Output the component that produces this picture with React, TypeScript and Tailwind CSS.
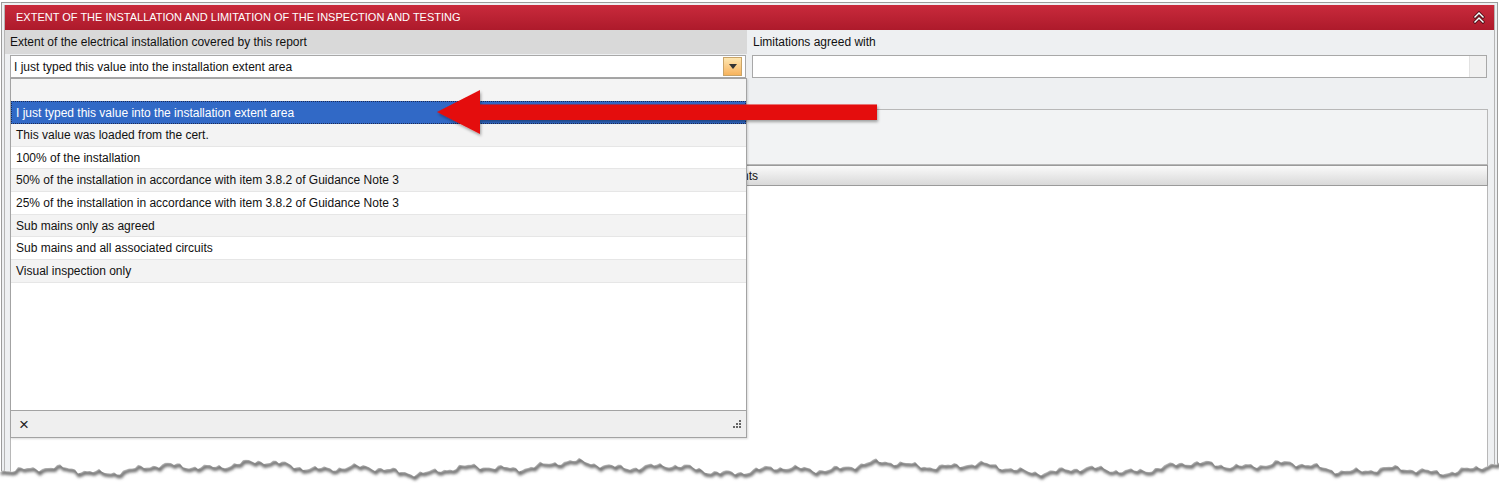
import React from 'react'

const options = [
  'This value was loaded from the cert.',
  '100% of the installation',
  '50% of the installation in accordance with item 3.8.2 of Guidance Note 3',
  '25% of the installation in accordance with item 3.8.2 of Guidance Note 3',
  'Sub mains only as agreed',
  'Sub mains and all associated circuits',
  'Visual inspection only'
]

// torn paper edge across the bottom of the screenshot
const edge: [number, number][] = []
for (let x = 0; x <= 1500; x += 3) {
  const y =
    467 +
    3.4 * Math.sin(x * 0.019) +
    2.6 * Math.sin(x * 0.061 + 1.3) +
    1.8 * Math.sin(x * 0.17 + 0.7) +
    1.3 * Math.sin(x * 0.47 + 2.1) +
    0.8 * Math.sin(x * 1.31 + 0.4)
  edge.push([x, Math.round(y * 10) / 10])
}
const edgeLine = edge.map(([x, y], i) => `${i ? 'L' : 'M'}${x},${y}`).join(' ')
const belowEdge = `${edgeLine} L1500,483 L0,483 Z`

const TornEdge = () => (
  <svg className="pointer-events-none absolute left-0 top-0" width="1499" height="483" viewBox="0 0 1499 483">
    <defs>
      <clipPath id="below">
        <path d={belowEdge} />
      </clipPath>
      <filter id="blur" x="-5%" y="-50%" width="110%" height="200%">
        <feGaussianBlur stdDeviation="1.5" />
      </filter>
    </defs>
    <path d={belowEdge} fill="#ffffff" />
    <g clipPath="url(#below)">
      <path d={edgeLine} transform="translate(1 2)" fill="none" stroke="#666" strokeWidth="3.5" filter="url(#blur)" />
    </g>
  </svg>
)

const Arrow = () => (
  <svg className="pointer-events-none absolute left-0 top-0" width="900" height="150" viewBox="0 0 900 150">
    <defs>
      <filter id="ash" x="-5%" y="-30%" width="110%" height="160%">
        <feDropShadow dx="1" dy="2" stdDeviation="1.5" floodColor="#000" floodOpacity="0.35" />
      </filter>
    </defs>
    <polygon
      points="437,112 480,90 480,104.5 877,104.5 877,120 480,120 480,134"
      fill="#e40c0c"
      filter="url(#ash)"
    />
  </svg>
)

const Collapse = () => (
  <svg width="12" height="13" viewBox="0 0 12 13">
    <path d="M2 6 L6 2 L10 6 M2 11 L6 7 L10 11" fill="none" stroke="#3a0a10" strokeWidth="3" strokeLinecap="square" />
    <path d="M2 6 L6 2 L10 6 M2 11 L6 7 L10 11" fill="none" stroke="#ffffff" strokeWidth="1.5" strokeLinecap="square" />
  </svg>
)

const Dropdown = () => (
  <div className="absolute left-[10px] top-[78px] flex h-[360px] w-[737px] flex-col border border-[#a3a3a3] bg-white shadow-[1px_1px_2px_rgba(0,0,0,0.15)]">
    <div className="h-[22px] shrink-0 bg-[#f4f4f4]" />
    <div className="flex h-[23px] shrink-0 items-center border border-dotted border-[#1c2a55] bg-[#3169c6] pl-[4px] text-white">
      I just typed this value into the installation extent area
    </div>
    {options.map((o, i) => (
      <div
        key={o}
        className={`flex h-[22.7px] shrink-0 items-center border-b border-[#e6e6e6] pl-[5px] ${i % 2 === 0 ? 'bg-[#f3f3f3]' : 'bg-white'}`}
      >
        {o}
      </div>
    ))}
    <div className="flex-1" />
    <div className="flex h-[27px] shrink-0 items-center justify-between border-t border-[#a3a3a3] bg-[#efefef] pl-[8px] pr-[4px]">
      <span className="text-[17px] leading-none text-[#222]">×</span>
      <svg width="10" height="10" viewBox="0 0 10 10">
        <g fill="#666">
          <rect x="7" y="1" width="2" height="2" />
          <rect x="4" y="4" width="2" height="2" />
          <rect x="7" y="4" width="2" height="2" />
          <rect x="1" y="7" width="2" height="2" />
          <rect x="4" y="7" width="2" height="2" />
          <rect x="7" y="7" width="2" height="2" />
        </g>
      </svg>
    </div>
  </div>
)

export default function App() {
  return (
    <div className="relative h-[483px] w-[1499px] overflow-hidden bg-white font-['Liberation_Sans',Arial,sans-serif] text-[12px] text-[#111]">
      <div className="ml-[1px] mt-[2px] h-[490px] w-[1497px] border border-[#9c9c9c] bg-[#eef0f2] p-[2px]">
        <div className="flex h-full flex-col border-x border-[#b5b5b5]">
          <header className="flex h-[25px] shrink-0 items-center justify-between bg-gradient-to-b from-[#c92a3c] to-[#ad1a2b] pl-[11px] pr-[9px] text-[11px] text-white">
            <span>EXTENT OF THE INSTALLATION AND LIMITATION OF THE INSPECTION AND TESTING</span>
            <Collapse />
          </header>

          <div className="flex shrink-0">
            <div className="w-[742px] shrink-0">
              <div className="flex h-[24px] items-center bg-[#d9d9d9] pl-[5px]">Extent of the electrical installation covered by this report</div>
              <div className="pl-[5px] pr-[1px] pt-[1px]">
                <div className="flex h-[23px] items-center justify-between border border-[#a8a8a8] bg-white pl-[3px] pr-[3px]">
                  <span>I just typed this value into the installation extent area</span>
                  <div className="flex h-[19px] w-[19px] items-center justify-center border border-[#c9a468] bg-gradient-to-b from-[#fde6b0] to-[#f7b35c]">
                    <svg width="8" height="5" viewBox="0 0 8 5">
                      <path d="M0 0 H8 L4 5 Z" fill="#333" />
                    </svg>
                  </div>
                </div>
              </div>
            </div>
            <div className="flex-1">
              <div className="flex h-[24px] items-center pl-[6px]">Limitations agreed with</div>
              <div className="pl-[5px] pr-[7px] pt-[1px]">
                <div className="flex h-[23px] justify-end border border-[#a8a8a8] bg-white">
                  <div className="w-[17px] border-l border-[#e2e2e2] bg-[#f1f1f1]" />
                </div>
              </div>
            </div>
          </div>

          <div className="mt-[31px] ml-[5px] mr-[6px] flex flex-1 flex-col">
            <div className="h-[56px] border border-[#b8b8b8] bg-[#f2f3f4]" />
            <div className="flex h-[21px] items-center border border-[#9a9a9a] bg-gradient-to-b from-[#fafafa] to-[#d9d9d9]">
              <div className="w-[747px] text-right">Comments</div>
            </div>
            <div className="flex-1 border-x border-[#b8b8b8] bg-white" />
          </div>
        </div>
      </div>

      <Dropdown />
      <Arrow />
      <TornEdge />
    </div>
  )
}
